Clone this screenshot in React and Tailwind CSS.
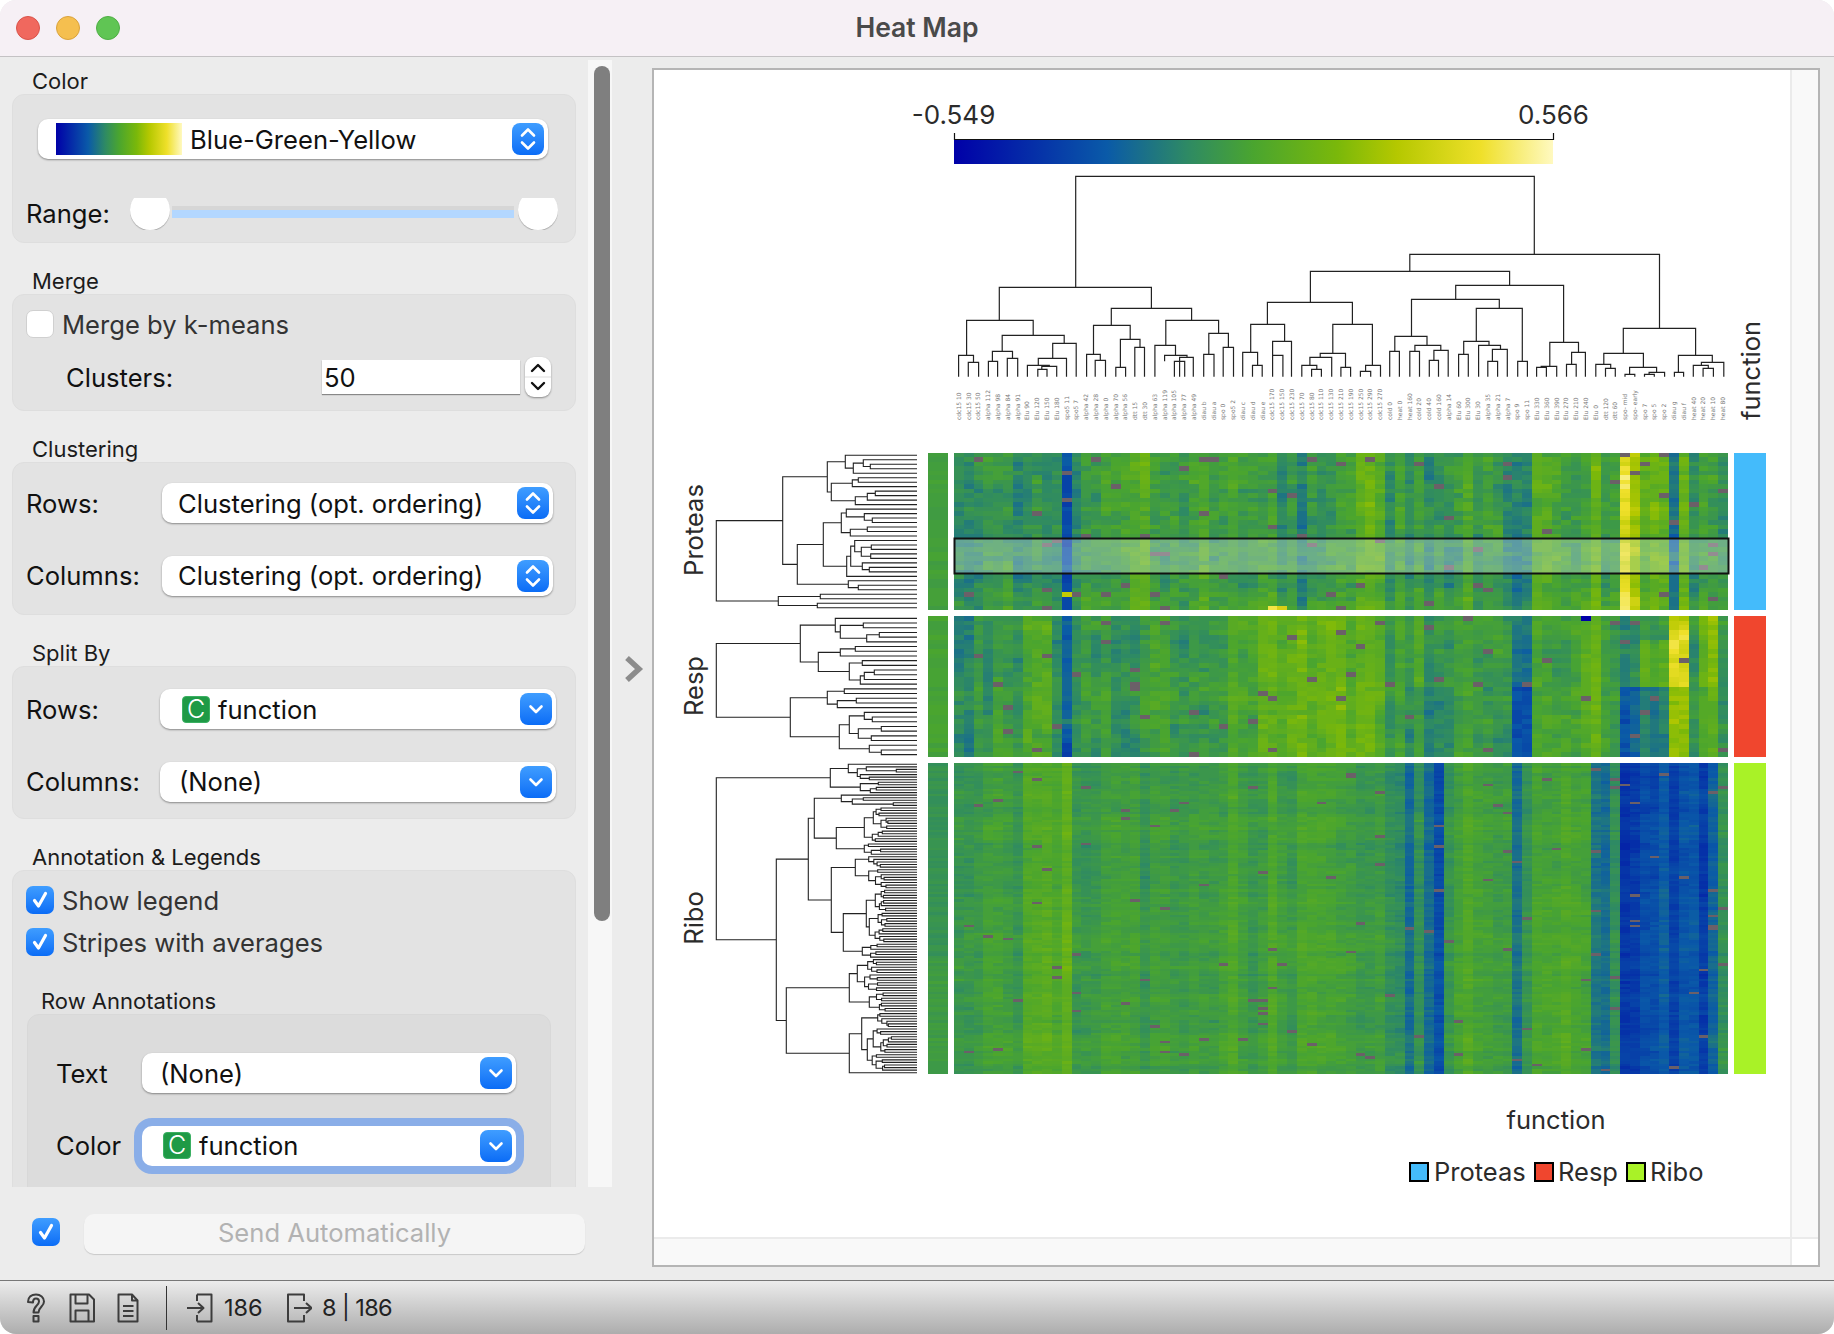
import React, { useMemo } from "react";

const STOPS = [[0,[0,0,168]],[.255,[10,90,168]],[.39,[46,138,100]],[.5,[74,165,47]],[.64,[122,184,10]],[.74,[181,200,0]],[.88,[239,224,42]],[1,[255,249,192]]];
function cmap(t) {
  t = Math.max(0, Math.min(1, t));
  for (let i = 1; i < STOPS.length; i++) {
    if (t <= STOPS[i][0]) {
      const [a, ca] = STOPS[i - 1], [b, cb] = STOPS[i];
      const f = (t - a) / (b - a);
      return `rgb(${ca.map((v, k) => Math.round(v + (cb[k] - v) * f)).join(",")})`;
    }
  }
  return "rgb(255,249,192)";
}
function rng(seed) {
  return () => {
    seed |= 0; seed = (seed + 0x6d2b79f5) | 0;
    let t = Math.imul(seed ^ (seed >>> 15), 1 | seed);
    t = (t + Math.imul(t ^ (t >>> 7), 61 | t)) ^ t;
    return ((t ^ (t >>> 14)) >>> 0) / 4294967296;
  };
}
const PROF = {
  P: [.39,.39,.41,.47,.45,.47,.38,.38,.41,.39,.41,.21,.39,.48,.46,.47,.45,.50,.55,.58,.46,.44,.44,.43,.48,.52,.47,.49,.51,.45,.46,.49,.49,.39,.45,.35,.44,.41,.43,.47,.48,.58,.61,.55,.41,.47,.38,.48,.39,.42,.39,.43,.51,.42,.46,.41,.39,.35,.35,.53,.53,.51,.47,.45,.49,.61,.45,.49,.87,.74,.55,.63,.59,.32,.59,.38,.49,.47,.42],
  R: [.37,.36,.46,.42,.48,.47,.42,.54,.54,.54,.41,.26,.39,.47,.43,.47,.41,.41,.41,.46,.48,.49,.44,.43,.45,.45,.47,.47,.55,.53,.51,.59,.59,.56,.60,.62,.55,.60,.62,.63,.54,.61,.61,.56,.42,.49,.43,.53,.42,.47,.44,.48,.49,.46,.47,.44,.41,.27,.26,.51,.49,.49,.48,.49,.53,.60,.47,.45,.32,.35,.42,.37,.42,.76,.76,.42,.58,.66,.45],
  B: [.40,.41,.43,.48,.48,.46,.41,.55,.56,.57,.53,.62,.42,.41,.41,.47,.48,.47,.48,.40,.46,.46,.44,.44,.47,.45,.44,.47,.53,.46,.41,.44,.53,.46,.42,.51,.51,.50,.50,.47,.45,.42,.42,.46,.37,.35,.30,.37,.30,.22,.41,.49,.53,.48,.47,.45,.45,.31,.39,.51,.49,.50,.55,.50,.49,.33,.30,.37,.15,.16,.21,.21,.26,.18,.24,.24,.17,.28,.38],
};
const NCOL = 79, HX0 = 954, HX1 = 1728;
const colX = (i) => Math.round(HX0 + (i * (HX1 - HX0)) / NCOL);
const BLOCKS = [
  { key: "P", top: 453, bottom: 610, n: 35, seed: 11, nan: .022, sd: .055, ar: .03, k: .85 },
  { key: "R", top: 616, bottom: 757, n: 30, seed: 29, nan: .02, sd: .05, ar: .03, k: .88 },
  { key: "B", top: 763, bottom: 1074, n: 121, seed: 47, nan: .012, sd: .028, ar: .014, k: .62 },
];
function resp(c, r, v) {
  const top = r < 15;
  if (c >= 70 && c <= 72) v += top ? (r > 4 ? .13 : .03) : -.07;
  if (c === 68 || c === 69) v += top ? .05 : -.08;
  if (c === 73 || c === 74) v += top ? (r > 2 ? .09 : -.02) : -.07;
  if (c === 57 || c === 58) v += top ? .07 : -.06;
  if (c >= 46 && c <= 50 && !top) v -= .05;
  if (c === 76 || c === 77) v += top ? .04 : -.06;
  return v;
}
function buildHeat() {
  const paths = new Map();
  const add = (fill, x, y, w, h) => paths.set(fill, (paths.get(fill) || "") + `M${x} ${y}h${w}v${h}h${-w}z`);
  for (const b of BLOCKS) {
    const r = rng(b.seed), rh = (b.bottom - b.top) / b.n, prof = PROF[b.key];
    let smooth = 0;
    const drift = new Array(NCOL).fill(0);
    for (let row = 0; row < b.n; row++) {
      smooth = smooth * .6 + (r() - .5) * .035;
      const y0 = Math.round(b.top + row * rh), y1 = Math.round(b.top + (row + 1) * rh);
      for (let c = 0; c < NCOL; c++) {
        drift[c] = drift[c] * .8 + (r() + r() - 1) * b.ar;
        const side = c > 0 ? drift[c - 1] * .35 : 0;
        const base = prof[c] > .34 && prof[c] < .7 ? .475 + (prof[c] - .475) * b.k : prof[c];
        let v = base + smooth + drift[c] + side + (r() + r() - 1) * b.sd;
        if (b.key === "R") v = resp(c, row, v);
        let fill = cmap(Math.round(v * 100) / 100);
        if (r() < b.nan) fill = "#6b6068";
        if (b.key === "R" && row === 0 && c === 64) fill = "#0000a8";
        if (b.key === "P" && row === 34 && c === 32) fill = "#f5e545";
        if (b.key === "P" && row === 34 && c === 33) fill = "#d8d015";
        if (b.key === "P" && row === 31 && c === 11) fill = "#c2cb05";
        add(fill, colX(c), y0, colX(c + 1) - colX(c), y1 - y0);
      }
      const st = b.key === "B" ? (row < 76 ? .425 : .46) : b.key === "R" ? .485 : .475;
      add(cmap(Math.round((st + (r() - .5) * .035) * 100) / 100), 928, y0, 20, y1 - y0);
    }
  }
  return [...paths.entries()];
}

const L = 0;
function makeTrees() {
  const r = rng(77);
  const G = (n, x) => {
    if (n === 1) return L;
    if (n === 2) return [x, L, L];
    const k = Math.max(1, Math.min(n - 1, Math.round(n * (.25 + r() * .5))));
    const nx = () => x + (715 - x) * (.1 + r() * .25);
    return [x, k === 1 ? L : G(k, nx()), n - k === 1 ? L : G(n - k, nx())];
  };
  const proteas = [169,
    [368,
      [502,
        [556, L, [580, [610, L, [631, L, L]], L]],
        [514, [577, [595, L, L], L], [586, [622, [646, L, L], L], L]]],
      [412,
        [490,
          [544, [559, L, [613, L, [637, L, L]]], [571, [622, L, L], L]],
          [560, [572, [584, L, [604, [634, L, L], [632, L, L]]], [607, L, [628, L, L]]], L]],
        [565, L, [595, L, L]]]],
    [355, [481, L, L], [472, L, L]]];
  const respT = [169,
    [421,
      [526, L, [541, [610, L, L], [620, [658, L, L], L]]],
      [475, [541, [586, L, L], L], [568, [607, L, L], [601, [613, [643, L, L], L], L]]]],
    [391,
      [502, [553, L, L], [532, [589, L, L], L]],
      [538, [568, [613, L, [637, L, L]], [595, [664, L, L], [634, L, L]]], [628, L, [664, L, L]]]]];
  const ribo = [169,
    [511, [565, L, [592, [619, L, [709, L, L]], [601, L, [628, L, L]]]], [601, [655, L, L], [631, [649, L, L], L]]],
    [349,
      [445,
        [463,
          [544, L, [577, [610, L, L], [700, L, L]]],
          [529, [613, G(9, 640), G(5, 637)], G(5, 613)]],
        [514,
          [586, G(5, 626), G(8, 626)],
          [550, [619, G(9, 646), G(12, 628)], G(6, 607)]]],
      [379,
        [568, G(13, 592), G(8, 628)],
        [568, [605, G(6, 653), G(17, 622)], L]]]];
  return [proteas, respT, ribo];
}
function treePath(tree, b) {
  const rh = (b.bottom - b.top) / b.n;
  let idx = 0, d = "";
  const X = (v) => (660 + v / 3).toFixed(1);
  const walk = (n) => {
    if (n === L) { const y = b.top + (idx + .5) * rh; idx++; return [y, X(771)]; }
    const [ya, xa] = walk(n[1]);
    const [yb, xb] = walk(n[2]);
    const x = X(n[0]);
    d += `M${xa} ${ya.toFixed(1)}H${x}V${yb.toFixed(1)}H${xb}`;
    return [(ya + yb) / 2, x];
  };
  walk(tree);
  return d;
}
const COLU = [
  [306,1105,259,592,493],[173,438,592,691,655],[116,232,691,796,736],[102,128,796,860,817],[119,137,817,860,860],
  [178,286,736,784,760],[161,196,784,814,805],[154,170,814,860,860],[187,205,805,860,860],[266,307,760,805,860],
  [241,290,805,826,860],[222,260,826,860,829],[247,273,829,838,860],[240,256,838,860,860],
  [368,508,655,706,691],[337,401,706,793,748],[325,349,793,860,811],[340,358,811,860,860],[384,418,748,832,772],[376,393,832,860,860],[409,426,772,860,860],
  [463,555,691,766,730],[444,480,766,860,796],[461,500,796,814,802],[478,496,814,860,860],[487,511,802,860,860],[538,572,730,793,772],[529,547,793,860,860],[563,581,772,860,860],
  [888,1323,493,544,715],[715,1062,544,637,586],[640,788,637,703,703],[611,670,703,787,754],[597,623,787,860,826],[614,631,826,860,860],[649,682,754,796,860],[649,667,796,860,860],
  [754,823,703,790,826],[732,776,790,802,832],[714,752,802,826,860],[700,726,826,860,838],[717,734,838,860,860],[768,785,832,860,860],[811,837,826,844,860],[802,820,844,860,860],
  [968,1156,586,628,757],[891,1044,628,739,655],[862,918,739,784,766],[853,870,784,860,860],[897,942,766,784,781],[888,905,784,860,860],[930,955,781,811,860],[922,938,811,860,860],
  [1004,1084,655,754,814],[982,1026,754,793,766],[973,990,793,860,860],[1008,1046,766,860,778],[1032,1058,778,814,860],[1024,1041,814,860,860],[1076,1093,814,860,860],
  [1132,1182,757,829,787],[1117,1144,829,832,860],[1109,1126,832,860,860],[1170,1194,787,823,860],[1161,1178,823,860,860],
  [1260,1386,715,790,796],[1226,1295,790,823,832],[1212,1238,823,860,835],[1229,1246,835,860,860],[1271,1318,832,853,847],[1263,1280,853,860,860],[1305,1332,847,853,860],[1297,1314,853,860,860],
  [1356,1415,796,847,817],[1349,1365,847,860,860],[1396,1435,817,826,860],[1382,1408,826,860,835],[1399,1417,835,860,860],
];
const columnPath = () => COLU.map(([a, b, y, ya, yb]) => {
  const X = (v) => (900 + v / 1.742).toFixed(1), Y = (v) => (90 + v / 3).toFixed(1);
  return `M${X(a)} ${Y(ya)}V${Y(y)}H${X(b)}V${Y(yb)}`;
}).join("");
const LABELS = ["cdc15 10","cdc15 30","cdc15 50","alpha 112","alpha 98","alpha 84","alpha 91","Elu 90","Elu 120","Elu 150","Elu 180","spo5 11","spo5 7","alpha 42","alpha 28","alpha 0","alpha 70","alpha 56","dtt 15","dtt 30","alpha 63","alpha 119","alpha 105","alpha 77","alpha 49","diau b","diau a","spo 0","spo5 2","diau c","diau d","diau e","cdc15 170","cdc15 150","cdc15 230","cdc15 70","cdc15 80","cdc15 110","cdc15 130","cdc15 210","cdc15 190","cdc15 250","cdc15 290","cdc15 270","cold 0","heat 0","heat 160","cold 20","cold 40","cold 160","alpha 14","Elu 60","Elu 300","Elu 30","alpha 35","alpha 21","alpha 7","spo 9","spo 11","Elu 330","Elu 360","Elu 390","Elu 270","Elu 210","Elu 240","Elu 0","dtt 120","dtt 60","spo- mid","spo- early","spo 7","spo 5","spo 2","diau g","diau f","heat 40","heat 20","heat 10","heat 80"];

function Plot() {
  const heat = useMemo(buildHeat, []);
  const trees = useMemo(() => makeTrees().map((t, i) => treePath(t, BLOCKS[i])), []);
  const col = useMemo(columnPath, []);
  const text = "font-[Inter,sans-serif] fill-[#2b2b2b]";
  return (
    <svg viewBox="654 70 1136 1167" className="block w-[1136px] h-[1167px]">
      <defs>
        <linearGradient id="cb">
          {STOPS.map(([o, c]) => <stop key={o} offset={o} stopColor={`rgb(${c.join(",")})`} />)}
        </linearGradient>
      </defs>
      <text x="953.500" y="124" textAnchor="middle" fontSize="26" className={text}>-0.549</text>
      <text x="1553.500" y="124" textAnchor="middle" fontSize="26" className={text}>0.566</text>
      <rect x="954" y="140" width="599" height="24" fill="url(#cb)" />
      <path d="M954.5 133V140M1553.5 133V140M954 139.5H1554" stroke="#111" strokeWidth="1.2" fill="none" />
      <path d={col} stroke="#222" strokeWidth="1.2" fill="none" />
      {LABELS.map((l, i) => {
        const x = HX0 + (i + .5) * 9.797 + 2;
        return <text key={l} x={x} y="420" fontSize="6" fill="#777" transform={`rotate(-90 ${x} 420)`} className="font-['DejaVu_Sans',sans-serif]">{l}</text>;
      })}
      <text x="1760" y="420" fontSize="25.500" transform="rotate(-90 1760 420)" className={text}>function</text>
      {trees.map((d, i) => <path key={i} d={d} stroke="#222" strokeWidth="1.1" fill="none" />)}
      {[["Proteas", 530], ["Resp", 686], ["Ribo", 918]].map(([t, y]) => (
        <text key={t} x="703" y={y} textAnchor="middle" fontSize="25.500" transform={`rotate(-90 703 ${y})`} className={text}>{t}</text>
      ))}
      <g shapeRendering="crispEdges">
        {heat.map(([fill, d]) => <path key={fill} d={d} fill={fill} />)}
        <rect x="1734" y="453" width="32" height="157" fill="#44bbfb" />
        <rect x="1734" y="616" width="32" height="141" fill="#f0462e" />
        <rect x="1734" y="763" width="32" height="311" fill="#a9f227" />
      </g>
      <rect x="954.5" y="538.5" width="774" height="35" fill="#ffffff" fillOpacity=".28" stroke="#111" strokeWidth="2" />
      <text x="1556" y="1129" textAnchor="middle" fontSize="25.500" className={text}>function</text>
      {[[1410, "#44bbfb", "Proteas", 1434], [1535, "#f0462e", "Resp", 1558], [1627, "#a9f227", "Ribo", 1650]].map(([x, c, t, tx]) => (
        <g key={t}>
          <rect x={x} y="1163" width="18" height="18" fill={c} stroke="#000" strokeWidth="2" />
          <text x={tx} y="1181" fontSize="25.500" className={text}>{t}</text>
        </g>
      ))}
    </svg>
  );
}

function BlueBtn({ double }) {
  return (
    <span className="absolute right-[4px] top-[4px] w-[32px] h-[32px] rounded-[8px] bg-gradient-to-b from-[#3f9dff] to-[#0a6cf6] flex items-center justify-center">
      <svg width="20" height="26" viewBox="0 0 20 26" fill="none" stroke="#fff" strokeWidth="2.6" strokeLinecap="round" strokeLinejoin="round">
        {double ? <path d="M4 9.5 10 3.5l6 6M4 16.5l6 6 6-6" /> : <path d="M4.5 10.5 10 16l5.5-5.5" />}
      </svg>
    </span>
  );
}
function CIcon() {
  return <span className="w-[28px] h-[27px] mr-[8px] rounded-[4px] bg-[#1f9a46] border border-[#3bb063] text-white text-[25px] leading-[25px] font-light flex items-center justify-center">C</span>;
}
function Combo({ w, pl, double, icon, focus, children }) {
  return (
    <div className={`${w} ${pl} ${focus ? "ring-[8px] ring-[#8aaee8]" : ""} relative h-[40px] rounded-[10px] bg-white shadow-[0_1px_2px_rgba(0,0,0,.4)] flex items-center text-[25.6px] text-[#111]`}>
      {icon && <CIcon />}
      <span className="pt-[2px]">{children}</span>
      <BlueBtn double={double} />
    </div>
  );
}
function Check({ on, label, cls = "" }) {
  return (
    <div className={`flex items-center h-[28px] ${cls}`}>
      {on ? (
        <span className="w-[28px] h-[28px] rounded-[7px] bg-gradient-to-b from-[#3f9dff] to-[#0a6cf6] flex items-center justify-center">
          <svg width="20" height="20" viewBox="0 0 20 20" fill="none" stroke="#fff" strokeWidth="3.2" strokeLinecap="round" strokeLinejoin="round"><path d="M4.5 10.5 8.5 16 15.5 3.5" /></svg>
        </span>
      ) : (
        <span className="w-[28px] h-[28px] rounded-[7px] bg-white border border-[#d0d0d0]" />
      )}
      {label && <span className="ml-[8px] pt-[1px] text-[25.6px] leading-[28px] text-[#333]">{label}</span>}
    </div>
  );
}
function Heading({ children, cls = "ml-[32px]" }) {
  return <div className={`${cls} h-[25px] leading-[25px] text-[22px] text-[#1c1c1c]`}>{children}</div>;
}
function Box({ children, cls = "" }) {
  return <div className={`mx-[12px] rounded-[12px] bg-[#e3e3e3] border border-[#dedede] ${cls}`}>{children}</div>;
}
function Row({ label, lw, cls = "", children }) {
  return (
    <div className={`flex items-center ${cls}`}>
      <span className={`${lw} pt-[2px] text-[25.6px] text-[#111]`}>{label}</span>
      {children}
    </div>
  );
}
function Handle({ side }) {
  return (
    <span className={`absolute ${side} top-0 w-[40px] h-[32px] overflow-hidden`}>
      <span className="block -mt-[8px] w-[40px] h-[40px] rounded-full bg-white shadow-[0_1px_1px_rgba(0,0,0,.25)]" />
    </span>
  );
}

function Sidebar() {
  return (
    <div className="w-[612px] shrink-0 pt-[3px]">
      <div className="h-[1127px] overflow-hidden flex">
        <div className="w-[588px] shrink-0 pt-[9px]">
          <Heading>Color</Heading>
          <Box cls="h-[149px] pt-[24px]">
            <div className="relative ml-[25px] w-[510px] h-[40px] rounded-[10px] bg-white shadow-[0_1px_2px_rgba(0,0,0,.4)] flex items-center pl-[18px] text-[25.6px] text-[#111]">
              <span className="w-[126px] h-[32px] mr-[8px] bg-[linear-gradient(90deg,#0000a8_0%,#0a5aa8_25.5%,#2e8a64_39%,#4aa52f_50%,#7ab80a_64%,#b5c800_74%,#efe02a_88%,#fff9c0_100%)]" />
              <span className="pt-[2px]">Blue-Green-Yellow</span>
              <BlueBtn double />
            </div>
            <div className="flex mt-[39px]">
              <span className="ml-[13px] w-[104px] text-[25.6px] leading-[32px] text-[#111]">Range:</span>
              <div className="relative w-[428px] h-[32px]">
                <span className="absolute left-[42px] top-[8px] w-[342px] h-[12px] bg-[#d6d6d6]" />
                <span className="absolute left-[42px] top-[12px] w-[342px] h-[8px] bg-[#b3d7ff]" />
                <Handle side="left-0" />
                <Handle side="right-0" />
              </div>
            </div>
          </Box>
          <div className="mt-[26px]"><Heading>Merge</Heading></div>
          <Box cls="h-[117px] pt-[15px]">
            <Check label="Merge by k-means" cls="ml-[13px]" />
            <div className="flex items-center mt-[19px] ml-[53px] h-[40px]">
              <span className="w-[256px] pt-[2px] text-[25.6px] text-[#111]">Clusters:</span>
              <span className="w-[198px] h-[34px] bg-white shadow-[0_1px_1px_rgba(0,0,0,.4)] pl-[2px] pt-[1px] text-[25.6px] leading-[34px] text-[#111]">50</span>
              <span className="ml-[5px] w-[26px] h-[40px] rounded-[9px] bg-white shadow-[0_1px_2px_rgba(0,0,0,.4)] flex items-center justify-center">
                <svg width="26" height="40" viewBox="0 0 26 40" fill="none" stroke="#111" strokeWidth="2.4" strokeLinecap="round" strokeLinejoin="round">
                  <path d="M7 14l6-6 6 6M7 26l6 6 6-6" />
                  <path d="M0 20H26" stroke="#ddd" strokeWidth="1" />
                </svg>
              </span>
            </div>
          </Box>
          <div className="mt-[26px]"><Heading>Clustering</Heading></div>
          <Box cls="h-[153px] pt-[20px]">
            <Row label="Rows:" lw="ml-[13px] w-[136px]">
              <Combo w="w-[391px]" pl="pl-[16px]" double>Clustering (opt. ordering)</Combo>
            </Row>
            <Row label="Columns:" lw="ml-[13px] w-[136px]" cls="mt-[32px]">
              <Combo w="w-[391px]" pl="pl-[16px]" double>Clustering (opt. ordering)</Combo>
            </Row>
          </Box>
          <div className="mt-[26px]"><Heading>Split By</Heading></div>
          <Box cls="h-[153px] pt-[22px]">
            <Row label="Rows:" lw="ml-[13px] w-[134px]">
              <Combo w="w-[396px]" pl="pl-[22px]" icon>function</Combo>
            </Row>
            <Row label="Columns:" lw="ml-[13px] w-[134px]" cls="mt-[32px]">
              <Combo w="w-[396px]" pl="pl-[19px]">(None)</Combo>
            </Row>
          </Box>
          <div className="mt-[26px]"><Heading>Annotation &amp; Legends</Heading></div>
          <Box cls="pt-[15px]">
            <Check on label="Show legend" cls="ml-[13px]" />
            <Check on label="Stripes with averages" cls="ml-[13px] mt-[14px]" />
            <div className="mt-[33px]"><Heading cls="ml-[28px]">Row Annotations</Heading></div>
            <div className="ml-[14px] w-[524px] h-[260px] rounded-[12px] bg-[#dcdcdc] border border-[#d8d8d8] pt-[38px]">
              <Row label="Text" lw="ml-[28px] w-[86px]">
                <Combo w="w-[374px]" pl="pl-[18px]">(None)</Combo>
              </Row>
              <Row label="Color" lw="ml-[28px] w-[86px]" cls="mt-[32px]">
                <Combo w="w-[374px]" pl="pl-[21px]" icon focus>function</Combo>
              </Row>
            </div>
          </Box>
        </div>
        <div className="w-[26px] shrink-0 bg-[#f7f7f7] pt-[6px] pl-[6px]">
          <div className="w-[16px] h-[855px] rounded-full bg-[#7f7f7f]" />
        </div>
      </div>
      <div className="flex pt-[27px] pl-[32px]">
        <div className="pt-[4px]"><Check on /></div>
        <div className="ml-[24px] w-[501px] h-[40px] pb-[2px] rounded-[10px] bg-[#f5f5f5] shadow-[0_1px_1px_rgba(0,0,0,.15)] flex items-center justify-center text-[25.6px] text-[#b2b2b2]">Send Automatically</div>
      </div>
    </div>
  );
}
function StatusIcon({ w, children, cls = "" }) {
  return (
    <svg width={w} height="30" viewBox={`0 0 ${w} 30`} fill="none" stroke="#3d3d3d" strokeWidth="2" strokeLinejoin="round" className={cls}>{children}</svg>
  );
}
function StatusBar() {
  return (
    <div className="h-[54px] border-t border-[#777] bg-gradient-to-b from-[#ececec] to-[#adadad] flex items-center text-[23.5px] text-[#222] pl-[26px]">
      <StatusIcon w={20}><path d="M2 9C2 4 5.5 1.5 10 1.5S18 4.5 18 8.5c0 5-5 5-5.500 11H7.500C7.500 13 13 12.500 13 8.500 13 6.500 11.800 5.500 10 5.500S7 7 7 9.500Z" /><rect x="7.500" y="23" width="5" height="5.500" /></StatusIcon>
      <StatusIcon w={26} cls="ml-[23px]"><path d="M1.500 1.500H20l5 5v22H1.500Z" /><path d="M6.500 1.500v9h12v-9M6.500 28.500v-11h13v11" /></StatusIcon>
      <StatusIcon w={22} cls="ml-[22px]"><path d="M1.500 1.500H15l5.500 6v21h-19Z" /><path d="M15 1.500v6h5.500M6 13h10.500M6 18h10.500M6 23h10.500" /></StatusIcon>
      <span className="ml-[27px] w-px h-[44px] bg-[#333]" />
      <StatusIcon w={26} cls="ml-[20px]"><path d="M10 1.500H24.500V28.500H10M10 1.500V8M10 28.500V22M0 15H16M11 10l5.500 5-5.500 5" /></StatusIcon>
      <span className="ml-[11px] w-[62px]">186</span>
      <StatusIcon w={26}><path d="M18 8V1.500H2V28.500H18V22M8 15H25M20 10l5.500 5-5.500 5" /></StatusIcon>
      <span className="ml-[10px] tracking-[-0.6px]">8 | 186</span>
    </div>
  );
}
export default function App() {
  return (
    <div className="w-[1834px] h-[1334px] bg-white font-[Inter,sans-serif]">
      <div className="w-full h-full rounded-[16px] overflow-hidden bg-[#ececec] flex flex-col">
        <div className="h-[57px] shrink-0 bg-[#f6f0f5] border-b border-[#c4c2c4] relative flex items-center justify-center">
          <div className="absolute left-[16px] top-[16px] flex gap-[16px]">
            <span className="w-[24px] h-[24px] rounded-full bg-[#f0685e] border border-[#d9534a]" />
            <span className="w-[24px] h-[24px] rounded-full bg-[#f5bf4f] border border-[#d9a23c]" />
            <span className="w-[24px] h-[24px] rounded-full bg-[#60c554] border border-[#4fae45]" />
          </div>
          <span className="text-[26.5px] font-semibold text-[#4a4a4a]">Heat Map</span>
        </div>
        <div className="h-[1223px] shrink-0 flex">
          <Sidebar />
          <div className="w-[40px] pl-[4px] shrink-0 flex items-center justify-center">
            <svg width="22" height="30" viewBox="0 0 22 30" fill="none" stroke="#8c8c8c" strokeWidth="5.500" strokeLinecap="butt" strokeLinejoin="miter"><path d="M4 4l12 11L4 26" /></svg>
          </div>
          <div className="mt-[11px] w-[1168px] h-[1199px] border-2 border-[#b5b5b5] flex flex-col">
            <div className="flex h-[1167px]">
              <div className="w-[1136px] bg-white"><Plot /></div>
              <div className="w-[28px] bg-[#f9f9f9] border-l-2 border-[#ebebeb]" />
            </div>
            <div className="flex flex-1">
              <div className="w-[1136px] bg-[#f9f9f9] border-t-2 border-[#ebebeb]" />
              <div className="w-[28px] bg-white border-t-2 border-l-2 border-[#ebebeb]" />
            </div>
          </div>
        </div>
        <StatusBar />
      </div>
    </div>
  );
}
